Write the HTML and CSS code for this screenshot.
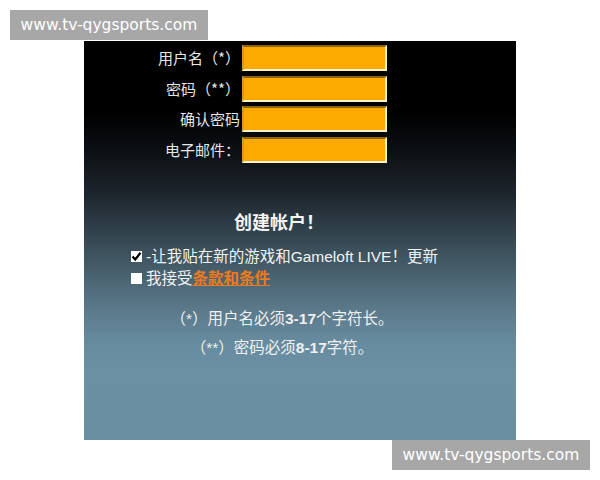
FILE: index.html
```html
<!DOCTYPE html>
<html lang="zh">
<head>
<meta charset="utf-8">
<title>创建帐户</title>
<link rel="stylesheet" href="styles.css">
</head>
<body>
<div class="page">
  <div class="wm wm-top">www.tv-qygsports.com</div>
  <div class="panel">
    <div class="fields">
      <label class="lbl">用户名（*）</label><div class="inp"></div>
      <label class="lbl">密码（**）</label><div class="inp"></div>
      <label class="lbl">确认密码</label><div class="inp"></div>
      <label class="lbl">电子邮件：</label><div class="inp"></div>
    </div>
    <h2 class="title">创建帐户！</h2>
    <div class="checks">
      <div class="chk-row">
        <span class="box"><svg width="11" height="11" viewBox="0 0 11 11"><path d="M1.5 5.5 L4.2 8.5 L9.5 1.8" fill="none" stroke="#000" stroke-width="2.2"/></svg></span>
        <span>-让我贴在新的游戏和Gameloft LIVE！更新</span>
      </div>
      <div class="chk-row">
        <span class="box"></span>
        <span>我接受<a class="terms">条款和条件</a></span>
      </div>
    </div>
    <p class="note n1">（*）用户名必须<b>3-17</b>个字符长。</p>
    <p class="note n2">（**）密码必须<b>8-17</b>字符。</p>
  </div>
  <div class="wm wm-bottom">www.tv-qygsports.com</div>
</div>
</body>
</html>
```
FILE: styles.css
```css
html, body {
  margin: 0;
  padding: 0;
  background: #fff;
}
.page {
  padding-top: 10px;
  font-family: "Liberation Sans", "Noto Sans CJK SC", sans-serif;
}
.wm {
  width: 198px;
  height: 30px;
  box-sizing: border-box;
  background: #a7a7a7;
  color: #fff;
  font-family: "DejaVu Sans", "Liberation Sans", sans-serif;
  font-size: 15.5px;
  line-height: 30px;
  text-align: center;
}
.wm-top {
  margin-left: 10px;
}
.wm-bottom {
  margin-left: 392px;
}
.panel {
  margin-left: 84px;
  margin-top: 1px;
  width: 432px;
  height: 399px;
  box-sizing: border-box;
  padding-top: 4px;
  background: linear-gradient(to bottom,
    #000 0px, #000 72px, #0c1014 110px, #1c232a 150px,
    #3c515c 210px, #587585 262px, #678b9e 300px, #6b90a3 330px, #6a8fa2 399px);
  color: #ececec;
  font-family: "Liberation Sans", "Noto Sans CJK SC", sans-serif;
}
.fields {
  display: grid;
  grid-template-columns: 156px 145px;
  column-gap: 2px;
  row-gap: 4.5px;
}
.lbl {
  font-family: "Noto Sans CJK SC", "Liberation Sans", sans-serif;
  font-size: 15px;
  line-height: 26px;
  text-align: right;
  color: #e6e6e6;
  white-space: nowrap;
}
.inp {
  height: 26px;
  box-sizing: border-box;
  background: #fca900;
  border: 2px solid;
  border-color: #8a6412 #fff2cc #fff2cc #d59a2a;
}
.title {
  margin: 0;
  padding-top: 47px;
  width: 390px;
  text-align: center;
  font-size: 18px;
  line-height: 26px;
  font-weight: bold;
  color: #f4f4f4;
}
.checks {
  margin-top: 11px;
  margin-left: 47px;
  display: flex;
  flex-direction: column;
  gap: 2px;
}
.chk-row {
  display: flex;
  align-items: center;
  gap: 4px;
  font-size: 15.5px;
  line-height: 20px;
  color: #f2f2f2;
  white-space: nowrap;
}
.box {
  width: 11px;
  height: 11px;
  background: #fff;
  display: inline-flex;
}
.terms {
  color: #ef7a1c;
  font-weight: bold;
  text-decoration: underline;
}
.note {
  margin: 0;
  width: 396px;
  text-align: center;
  font-size: 15.5px;
  line-height: 20px;
  color: #f0f0f0;
}
.note b {
  font-weight: bold;
}
.n1 {
  margin-top: 20px;
}
.n2 {
  margin-top: 9px;
}
```
